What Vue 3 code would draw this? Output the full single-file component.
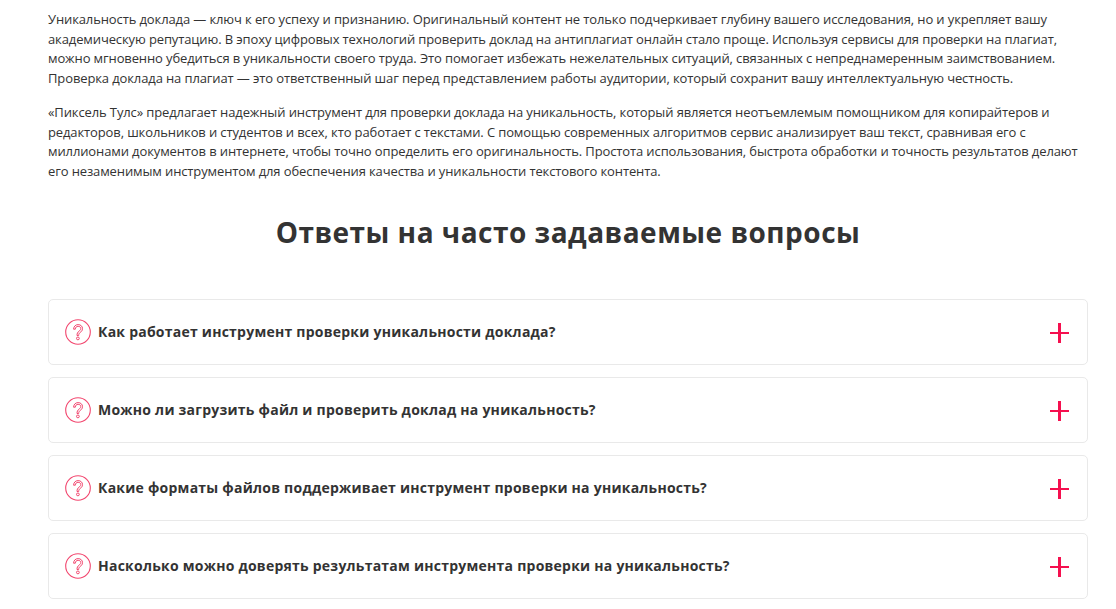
<script setup>
const faqs = [
  'Как работает инструмент проверки уникальности доклада?',
  'Можно ли загрузить файл и проверить доклад на уникальность?',
  'Какие форматы файлов поддерживает инструмент проверки на уникальность?',
  'Насколько можно доверять результатам инструмента проверки на уникальность?'
]
</script>

<template>
  <main class="page">
    <p class="para first">Уникальность доклада — ключ к его успеху и признанию. Оригинальный контент не только подчеркивает глубину вашего исследования, но и укрепляет вашу академическую репутацию. В эпоху цифровых технологий проверить доклад на антиплагиат онлайн стало проще. Используя сервисы для проверки на плагиат, можно мгновенно убедиться в уникальности своего труда. Это помогает избежать нежелательных ситуаций, связанных с непреднамеренным заимствованием. Проверка доклада на плагиат — это ответственный шаг перед представлением работы аудитории, который сохранит вашу интеллектуальную честность.</p>
    <p class="para">«Пиксель Тулс» предлагает надежный инструмент для проверки доклада на уникальность, который является неотъемлемым помощником для копирайтеров и редакторов, школьников и студентов и всех, кто работает с текстами. С помощью современных алгоритмов сервис анализирует ваш текст, сравнивая его с миллионами документов в интернете, чтобы точно определить его оригинальность. Простота использования, быстрота обработки и точность результатов делают его незаменимым инструментом для обеспечения качества и уникальности текстового контента.</p>
    <h2 class="title">Ответы на часто задаваемые вопросы</h2>
    <div class="list">
      <div v-for="q in faqs" :key="q" class="card">
        <svg class="qicon" width="26" height="26" viewBox="0 0 26 26" fill="none" stroke="#f2476f">
          <circle cx="13" cy="13" r="12.3" stroke-width="1.1"/>
          <path d="M8.6 10.2C8.6 7.4 10.6 5.6 13.1 5.6c2.6 0 4.4 1.7 4.4 4 0 1.9-1 2.9-2.3 3.9-1.1.8-1.5 1.5-1.5 3h-1.7c0-2.1.6-3.2 2-4.3 1.1-.9 1.8-1.5 1.8-2.6 0-1.3-1.1-2.3-2.7-2.3-1.7 0-2.8 1.2-2.8 2.9z" stroke-width="1"/>
          <circle cx="12.9" cy="19.4" r="1.4" stroke-width="1"/>
        </svg>
        <span class="q">{{ q }}</span>
        <span class="plus"></span>
      </div>
    </div>
  </main>
</template>

<style scoped>
.page {
  width: 1040px;
  margin-left: 48px;
  font-family: "Open Sans", sans-serif;
  color: #333;
}
.para {
  margin: 0 0 15px;
  font-size: 13px;
  line-height: 19.5px;
  letter-spacing: -0.118px;
}
.first { padding-top: 10px; }
.title {
  margin: 32px 0 48px;
  font-size: 28px;
  line-height: 38px;
  font-weight: 700;
  text-align: center;
  letter-spacing: 0.5px;
}
.list {
  display: flex;
  flex-direction: column;
  gap: 12px;
}
.card {
  display: flex;
  align-items: center;
  height: 66px;
  box-sizing: border-box;
  padding: 0 18px 0 16px;
  border: 1px solid #e9e9e9;
  border-radius: 5px;
  background: #fff;
}
.qicon { flex: none; margin-right: 7px; }
.q {
  flex: 1;
  padding-bottom: 2px;
  font-size: 14px;
  font-weight: 700;
  letter-spacing: 0.24px;
}
.plus {
  flex: none;
  width: 19px;
  height: 20px;
  margin-top: 2px;
  background:
    linear-gradient(#f5104f, #f5104f) center / 19px 2px no-repeat,
    linear-gradient(#f5104f, #f5104f) center / 3px 20px no-repeat;
}
</style>
